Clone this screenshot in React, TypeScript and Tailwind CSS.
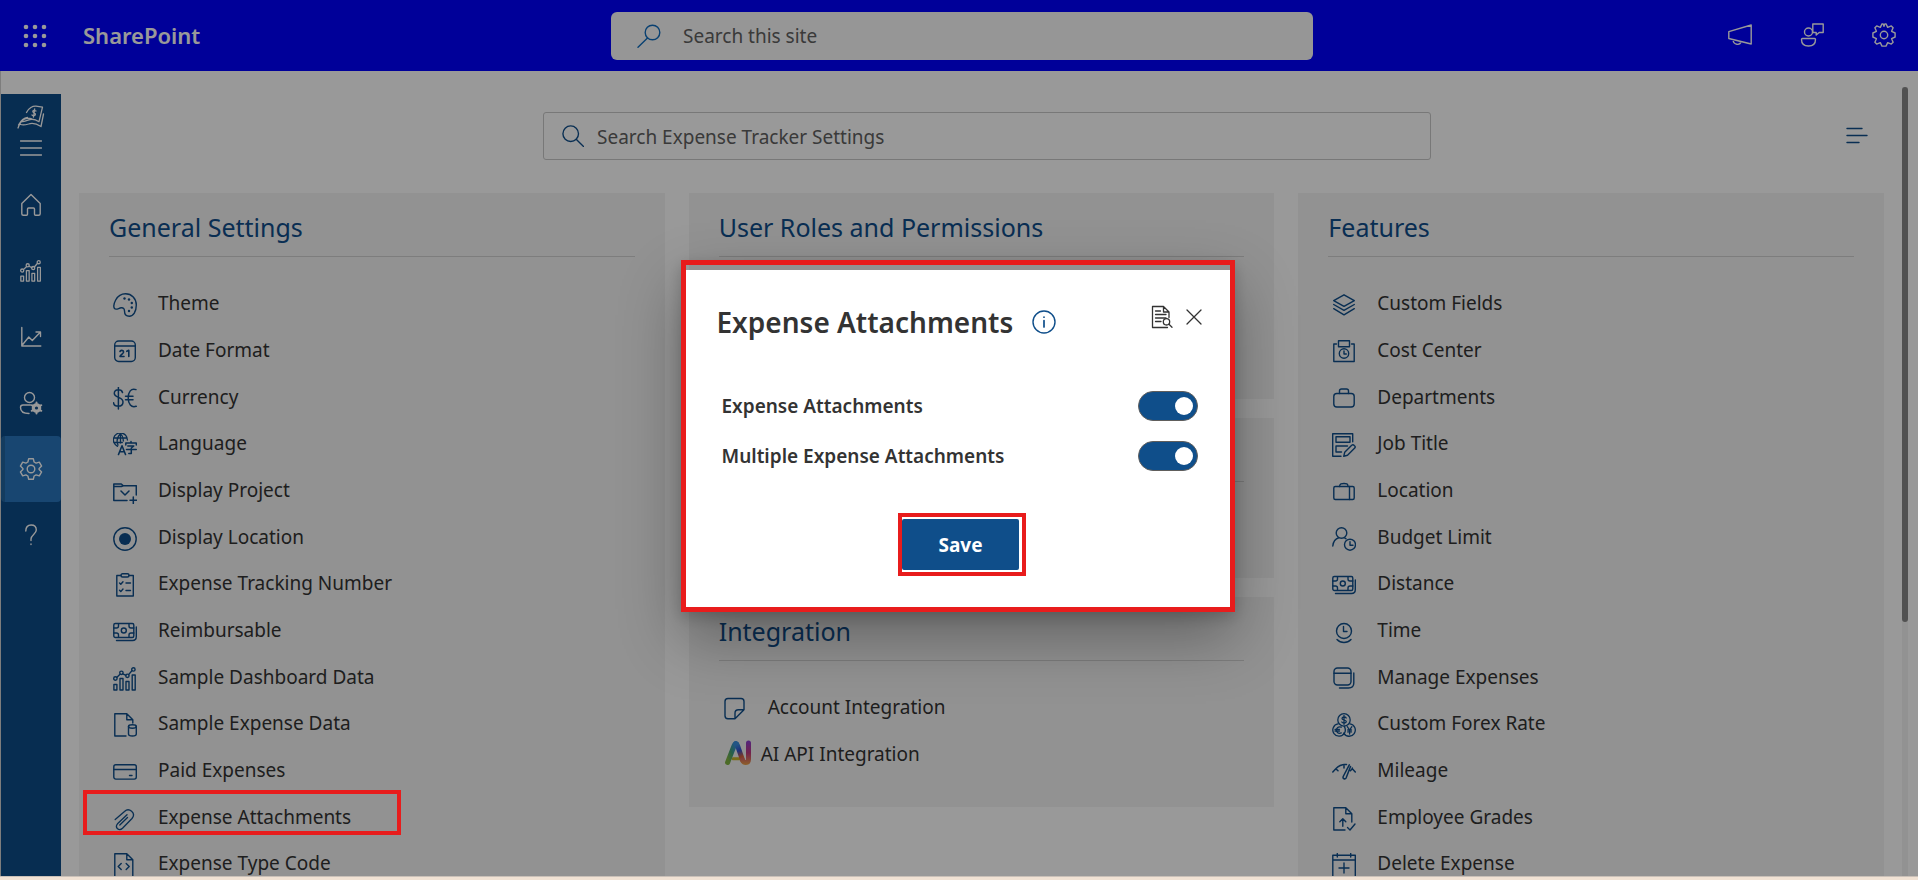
import React from "react";

type IconProps = { className?: string };

function Svg({ className = "size-6", children, w = 1.4, box = "0 0 24 24" }: { className?: string; children: React.ReactNode; w?: number; box?: string }) {
  return (
    <svg aria-hidden="true" viewBox={box} fill="none" stroke="currentColor" strokeWidth={w} strokeLinejoin="round" strokeLinecap="round" className={`shrink-0 ${className}`}>
      {children}
    </svg>
  );
}

const Palette = () => (
  <Svg>
    <path d="M12.5.8C18.700.8 23.300 5.500 23.300 12c0 6.500-3 11.200-7 11.200-3.600 0-4.800-2.800-4.800-5.200 0-2.300-1.200-3.500-3.300-3.200C5.500 15.200 3 17.200 1.500 15.500-.5 12.500 3 .8 12.500.8Z" />
    <g fill="currentColor" stroke="none">
      <circle cx="11.500" cy="5.500" r="1.200" /><circle cx="16" cy="6.500" r="1.200" /><circle cx="18.800" cy="10" r="1.200" /><circle cx="18.800" cy="14.500" r="1.200" /><circle cx="16" cy="18" r="1.200" />
    </g>
  </Svg>
);
const DateIcon = () => (
  <Svg>
    <rect x="1.700" y="1" width="20.600" height="20.500" rx="4" /><path d="M2 6h20" />
    <path d="M7 11.500c.3-1.600 3.600-1.600 3.600.5 0 1.600-3.600 3-3.600 4.500h4M13.800 11.300l2-1v6.200" strokeWidth="1.600" />
  </Svg>
);
const Currency = () => (
  <Svg w={1.5}>
    <path d="M9.500 5.500C9 3.500 7.500 2.800 5.300 2.800 3 2.800 1.300 4 1.300 6.300c0 5 8.700 3.200 8.700 8.600 0 2.600-2 4.200-4.700 4.200C2.500 19.100.8 18 .6 15.700M5.400.5v21.500M23 2.600C18 .8 15.200 5 15.200 11s3 10 8 8.300M12.500 9.200h7.500M12.500 12.800h7.500" />
  </Svg>
);
const Language = () => (
  <Svg w={1.3}>
    <path d="M4.500 13.300A7 7 0 1 1 14.400 7M.8 5h12.600M.8 9.500h8.500M7.500.6c-3.500 3.500-4 8-2.500 11.500M7.500.6C9.500 2.500 10.500 5 10.300 8M7.500.8v9.200" />
    <path d="M5.500 21.500 9 12.800l3.500 8.700M6.700 18.800h4.700" strokeWidth="1.600" />
    <path d="M12.800 12v-2h10.500v2M18 8.500v1.500M14.800 13h6l-2.500 2v5.500h-2.500M13.500 16.500h9.800" strokeWidth="1.500" />
  </Svg>
);
const Project = () => (
  <Svg w={1.5}>
    <path d="M14 20.500H.8V4h7.500l2 1.700h13V15M.8 6.500h7.500l2-.8M8 11l4 4 4-4M20.300 17v6.500M17 20.200h6.700" />
  </Svg>
);
const LocationDot = () => (
  <Svg><circle cx="12" cy="12" r="11.200" /><circle cx="12" cy="12" r="6" fill="currentColor" stroke="none" /></Svg>
);
const Clipboard = () => (
  <Svg>
    <path d="M8 2.500H3.800V23h16.500V2.500H16" /><rect x="8" y=".8" width="8" height="3.200" rx="1.500" />
    <path d="m6.500 10 1.300 1.300 2.200-2.600M6.500 17.300l1.300 1.300L10 16M13 10h4.500M13 17.500h4.500" />
  </Svg>
);
const Cash = () => (
  <Svg>
    <rect x=".8" y="3.500" width="20" height="14" rx="1.500" /><circle cx="10.800" cy="10.500" r="2.500" />
    <path d="M.8 8H3.500a2 2 0 0 0 2-2V3.800M16 3.800V6a2 2 0 0 0 2 2h2.800M.8 13H3.500a2 2 0 0 1 2 2v2.400M16 17.400V15a2 2 0 0 1 2-2h2.800M3.500 20.500H19.500c2.700 0 3.800-1.500 3.800-4V7" />
  </Svg>
);
const Bars = ({ className }: IconProps) => (
  <Svg className={className}>
    <path d="M.9 17.500h3V23h-3ZM7 11.500h3V23H7ZM13 14.500h3V23h-3ZM19.200 8h3V23h-3ZM4 10.200l3-2.900M9.800 6.800l3.200 1.500M15.600 7.600l3.300-3.800" />
    <circle cx="2.400" cy="11.500" r="1.700" /><circle cx="8.400" cy="5.800" r="1.700" /><circle cx="14.400" cy="8.800" r="1.700" /><circle cx="20.400" cy="2.400" r="1.700" />
  </Svg>
);
const DocData = () => (
  <Svg>
    <path d="M13 23H1.800V.8h12l6 6V10M13.800.8v6h6" /><ellipse cx="19.400" cy="13.500" rx="3.900" ry="1.700" /><path d="M15.500 13.500v7.500c0 2.700 7.800 2.700 7.800 0v-7.500" />
  </Svg>
);
const Card = () => (
  <Svg><rect x=".8" y="4.800" width="22.500" height="14.300" rx="2" /><path d="M.8 9.500h22.500M16.500 15.500H19" /></Svg>
);
const Clip = () => (
  <Svg w={1.3}><path d="M2.200 12.500 11.500 4.500c4.500-4.300 12 1.500 7.500 7L9.500 21.300c-3.500 3.300-8-.8-5-4.500l9.500-9M6.800 18 14.500 10.500" /></Svg>
);
const DocCode = () => (
  <Svg><path d="M1.800 25V.8h12l6 6V25M13.800.8v6h6M8.200 10.500 5.200 13.500l3 3M13.200 10.500l3 3-3 3" /></Svg>
);
const Layers = () => (
  <Svg><path d="m12 1.800 10.300 5.800L12 13.400 1.700 7.600ZM1.700 11.500 12 17.300l10.300-5.800M1.700 15.700 12 21.800l10.300-6.100" /></Svg>
);
const CostCenter = () => (
  <Svg><path d="M4.500 4H1.800v17.500h20.400V4h-2.700M6.500.8h11v6h-11Z" /><circle cx="12" cy="13.500" r="4.700" /><path d="M12 11v3h2.300" /></Svg>
);
const Briefcase = () => (
  <Svg><rect x="1.800" y="6.500" width="20.400" height="13.500" rx="3" /><path d="M7.500 6.500V4q0-2 2-2h5q2 0 2 2v2.500" /></Svg>
);
const JobTitle = () => (
  <Svg>
    <path d="M9 23.300H.7V.8h20v8M4 3.800h14v5.500H4ZM15.500 13H4v6h5.500M4 13v6" /><path d="m22.300 12.500c1.200 1 1.200 1.800.2 2.800l-7 7-3.800 1 1-4 7-7q1.300-1 2.600.2Z" />
  </Svg>
);
const Suitcase = () => (
  <Svg><rect x="1.800" y="6.500" width="20.400" height="13" rx="1.500" /><path d="M17.500 6.500v13M7.500 6.500C7.800 3.500 9.500 3.500 12 3.500s4 0 4 3" /></Svg>
);
const Budget = () => (
  <Svg><circle cx="9.500" cy="6" r="5.300" /><path d="M.8 19c.5-4.500 2.700-7.300 6-8.200M12.300 10.800q1 .3 1.700 1" /><circle cx="18" cy="17.700" r="5.500" /><path d="M18 14.700v3.500h3" /></Svg>
);
const Clock = () => (
  <Svg><circle cx="12" cy="11" r="7.500" /><path d="M11.500 6.500v5H15M5 19.500c3.800 4 10.200 4 14 0" /></Svg>
);
const Stack = () => (
  <Svg><rect x="2" y="1" width="17" height="17" rx="3.500" /><path d="M2 6.300h17M7.500 21h9c3.700 0 5.300-1.700 5.300-5V6" /></Svg>
);
const Forex = () => (
  <Svg w={1.3}>
    <circle cx="12" cy="6.900" r="6.200" />
    <path d="M6 10.900a6.200 6.200 0 1 0 6.500 9M18 10.900a6.200 6.200 0 1 1-6.300 9.200M12.300 13.300q2 3.400.2 6.800" />
    <path d="M14.200 5c-.8-1.500-4.200-1.300-4.200.5s4.300 1.200 4.300 3.100c0 1.800-3.600 2-4.500.4M12 2.500v8.800M9.300 14.200c-3-1.200-5 .8-5 2.900s2 4 5 2.800M3 16.300h4.500M3 18h4.500M15.300 13.700l2.300 3.300 2.300-3.300M17.600 17v4M15.700 17h3.800M15.700 18.900h3.800" />
  </Svg>
);
const Mileage = () => (
  <Svg w={1.5}>
    <path d="M.8 12 3.800 8.700C6.500 5.800 10 4.200 14.500 4.500M3.800 8.700l2.200 2.100M12 4.400V8M17.300 4.800 11.200 16.500c-.8 2.200 1.800 3.300 3 1.300L18.500 6.500M23.300 12 20.300 8.700l-1.900 2.100M20.300 8.700V8" />
  </Svg>
);
const Grades = () => (
  <Svg><path d="M13 23H1.800V.8h12l6 6V15M13.800.8v6h6M10.800 19.300V12M7.800 14.700l3-3 3 3M15.500 20.500l2.500 2.500 5-6" /></Svg>
);
const CalendarPlus = () => (
  <Svg><path d="M.8 2.300h22.500V24H.8ZM.8 7h22.500M5.300.5v3.500M18.700.5v3.500M12 10v10M7 15h10" /></Svg>
);
const Note = () => (
  <Svg><path d="M12 21.800H5c-2 0-3-1-3-3V4.500c0-2 1-3 3-3h13c2 0 3 1 3 3v8.300L12 21.800v-5.500c0-2.500 1-3.500 3.500-3.500H21" /></Svg>
);
const AiLogo = () => (
  <svg aria-hidden="true" viewBox="0 0 28 26" fill="none" strokeLinecap="round" strokeLinejoin="round" strokeWidth="5" className="h-[26px] w-7 shrink-0">
    <defs>
      <linearGradient id="ai-left" x1="0" y1="1" x2="1" y2="0"><stop offset=".1" stopColor="#7fb241" /><stop offset=".5" stopColor="#3f9f7b" /><stop offset=".9" stopColor="#3b8ede" /></linearGradient>
      <linearGradient id="ai-mid" gradientUnits="userSpaceOnUse" x1="12" y1="3" x2="20" y2="23"><stop offset=".1" stopColor="#3b8ede" /><stop offset=".4" stopColor="#3450d0" /><stop offset=".7" stopColor="#d5603c" /><stop offset="1" stopColor="#f08a41" /></linearGradient>
      <linearGradient id="ai-right" gradientUnits="userSpaceOnUse" x1="25" y1="1" x2="25" y2="25"><stop offset="0" stopColor="#8b3fd0" /><stop offset=".5" stopColor="#c1387f" /><stop offset="1" stopColor="#eca044" /></linearGradient>
    </defs>
    <path d="M10 18.700h7" stroke="#c9b52c" strokeWidth="3" />
    <path d="M4.600 22.500 11 6q1.200-3 2.500-2" stroke="url(#ai-left)" />
    <path d="M12.700 3.500q1.200.3 1.800 2L19.500 20" stroke="url(#ai-mid)" />
    <path d="M19.500 20q1 2.500 3 2.500 3 0 3-3V3" stroke="url(#ai-right)" />
  </svg>
);

type Item = { label: string; icon: () => React.ReactElement; highlight?: boolean; tight?: boolean };

const general: Item[] = [
  { label: "Theme", icon: Palette },
  { label: "Date Format", icon: DateIcon },
  { label: "Currency", icon: Currency },
  { label: "Language", icon: Language },
  { label: "Display Project", icon: Project },
  { label: "Display Location", icon: LocationDot },
  { label: "Expense Tracking Number", icon: Clipboard },
  { label: "Reimbursable", icon: Cash },
  { label: "Sample Dashboard Data", icon: Bars },
  { label: "Sample Expense Data", icon: DocData },
  { label: "Paid Expenses", icon: Card },
  { label: "Expense Attachments", icon: Clip, highlight: true },
  { label: "Expense Type Code", icon: DocCode },
];
const features: Item[] = [
  { label: "Custom Fields", icon: Layers },
  { label: "Cost Center", icon: CostCenter },
  { label: "Departments", icon: Briefcase },
  { label: "Job Title", icon: JobTitle },
  { label: "Location", icon: Suitcase },
  { label: "Budget Limit", icon: Budget },
  { label: "Distance", icon: Cash },
  { label: "Time", icon: Clock },
  { label: "Manage Expenses", icon: Stack },
  { label: "Custom Forex Rate", icon: Forex },
  { label: "Mileage", icon: Mileage },
  { label: "Employee Grades", icon: Grades },
  { label: "Delete Expense", icon: CalendarPlus },
];
const integration: Item[] = [
  { label: "Account Integration", icon: Note },
  { label: "AI API Integration", icon: AiLogo, tight: true },
];

function Panel({ title, items = [], className = "" }: { title?: string; items?: Item[]; className?: string }) {
  return (
    <section className={`bg-[#f3f3f3] px-[30px] pb-6 ${className}`}>
      <div className="h-16 border-b border-[#d0d0d0] pt-4">
        {title && <h2 className="text-[25px] leading-9 text-[#0f4e8a]">{title}</h2>}
      </div>
      <ul className="pt-6">
        {items.map(({ label, icon: Icon, highlight, tight }) => (
          <li key={label} className="relative h-[47px] nth-[3n]:h-[46px]">
            <a href="#" className={`flex items-start pl-1 text-[19px] leading-7 text-[#333] ${tight ? "gap-[10px]" : "gap-[21px]"}`}>
              <span className={`text-[#0f4e8a] ${tight ? "pt-2" : "pt-3"}`}><Icon /></span>
              <span className="pt-2">{label}</span>
            </a>
            {highlight && <span className="absolute -top-[5px] -left-[26px] z-20 h-[45px] w-[318px] border-4 border-[#e81c1c]" />}
          </li>
        ))}
      </ul>
    </section>
  );
}

const nav = [
  { label: "Home", icon: <Svg className="size-6"><path d="M2.800 10.500 12 1.500l9.200 9v10.200q0 1.500-1.500 1.500h-3.200q-1 0-1-1V16q0-1-1-1h-5q-1 0-1 1v5.200q0 1-1 1H4.300q-1.500 0-1.500-1.500Z" /></Svg> },
  { label: "Dashboard", icon: <Bars className="size-[22px]" /> },
  { label: "Reports", icon: <Svg className="size-6"><path d="M2.800 2.500v18.500h19M3.300 20l6.500-8 3.500 3.500L21 7.500M17 7h4.500v4.500" /></Svg> },
  { label: "Users", icon: <Svg className="size-6"><circle cx="10.500" cy="6.500" r="5" /><path d="M10 22.500c-5 0-8.500-1.500-8.500-6 0-1.500 1-2.500 2.500-2.500h7.500" /><circle cx="17.500" cy="17" r="3.300" strokeWidth="3" /><path d="M17.500 11.500v11M12.700 14.200l9.600 5.600M12.700 19.800l9.600-5.600" strokeWidth="2" /><circle cx="17.500" cy="17" r="1.600" fill="#0f4e8a" stroke="none" /></Svg> },
  { label: "Settings", active: true, icon: <Svg className="size-6"><path d="m9.700 1.700h4.600l.8 3.300 2 1.100 3.200-1 2.300 4-2.500 2.300v1.200l2.500 2.300-2.300 4-3.200-1-2 1.100-.8 3.300H9.700l-.8-3.300-2-1.100-3.200 1-2.300-4 2.500-2.300v-1.200L1.400 9.100l2.300-4 3.200 1 2-1.100Z" /><circle cx="12" cy="12" r="3.800" /></Svg> },
  { label: "Help", icon: <Svg className="size-6"><path d="M6.800 8c0-3.800 2.200-6 5.300-6s5.200 2 5.200 5c0 4-5.300 5-5.300 9v1.500M12 21v.6" /></Svg> },
];

function Toggle({ label }: { label: string }) {
  return (
    <label className="flex h-[50px] items-center justify-between text-[19px] font-semibold text-[#333]">
      {label}
      <input type="checkbox" role="switch" defaultChecked className="h-[30px] w-[60px] shrink-0 appearance-none rounded-full border border-[#605e5c] bg-[#0f4e8a] before:mt-[5px] before:ml-[36px] before:block before:size-[18px] before:rounded-full before:bg-white" />
    </label>
  );
}

export default function App() {
  return (
    <div className="flex h-screen flex-col overflow-hidden bg-white font-['Segoe_UI','Noto_Sans',sans-serif]">
      <header className="grid h-[71px] shrink-0 grid-cols-[611px_1fr_605px] items-center bg-[#0000ff] text-white">
        <div className="flex items-center gap-9 pl-[23px]">
          <button type="button" aria-label="App launcher">
            <svg viewBox="0 0 24 24" fill="currentColor" className="size-6">
              {[3, 12, 21].map((y) => [3, 12, 21].map((x) => <circle key={`${x}-${y}`} cx={x} cy={y} r="2.300" />))}
            </svg>
          </button>
          <a href="#" className="text-[22px] font-semibold">SharePoint</a>
        </div>
        <label className="flex h-12 items-center gap-[22px] rounded-md bg-[#fafafa] pl-[26px] text-[#0f6cbd]">
          <Svg className="size-6"><circle cx="15.500" cy="8.500" r="7.300" /><path d="M10.500 14 1 23.200" /></Svg>
          <input aria-label="Search this site" placeholder="Search this site" className="w-full bg-transparent pt-[2px] text-[19px] outline-none placeholder:text-[#616161]" />
        </label>
        <div className="flex items-center justify-end gap-12 pr-[22px] pb-[2px]">
          <button type="button" aria-label="Announcements"><Svg className="size-6"><path d="M.8 8.700 23.200 2v19L.8 15.500ZM5 16.700c.5 5.500 7 6 8 2" /></Svg></button>
          <button type="button" aria-label="Feedback"><Svg className="size-6"><circle cx="8.500" cy="9" r="4" /><path d="M2.500 15.500h12q1 0 1 1c0 4.500-2.500 6.500-7 6.500s-7-2-7-6.500q0-1 1-1ZM12.800 1h10.400v8.500h-4l-3 2.500V9.500h-3.400Z" /></Svg></button>
          <button type="button" aria-label="Site settings"><Svg className="size-6"><path d="M10 .9h1.200l.8 2.500.8-2.500H14l1.700 3.500 3.600-1.500 1.800 1.800-1.500 3.600L23.100 10v4l-3.500 1.700 1.500 3.600-1.800 1.800-3.600-1.500L14 23.100h-4l-1.700-3.500-3.600 1.500-1.800-1.800 1.500-3.600L.9 14v-4l3.500-1.700-1.500-3.600 1.800-1.800 3.600 1.500Z" /><circle cx="12" cy="12" r="3.700" /></Svg></button>
        </div>
      </header>

      <div className="flex min-h-0 flex-1 border-l border-[#d0d0d0]">
        <nav aria-label="Expense Tracker" className="mt-[23px] flex w-[60px] shrink-0 flex-col bg-[#0c4b87] text-white">
          <a href="#" aria-label="Expense Tracker" className="flex h-[46px] items-center justify-center">
            <Svg className="h-6 w-7" box="0 0 28 24" w={1.3}>
              <path d="M9.500 7.500C11.500 3 16 .8 19 1.200l6.500 1-3.500 14.500q-6-4-11-1.500-5 2-6.500 1M26.500 9 24 21.500Q17 17 11.500 19q-5 1.500-8 .5M1 23c3-9 9-11.500 14.500-8.500M1.500 20c2.500-4.500 5-7 9-7.500" />
              <path d="M19 6q-3-1.500-3.200.5c0 1.500 2.800 1.300 2.600 3-.2 1.600-2.400 1.400-3.400.5M17.700 4l-1.200 8" />
            </Svg>
          </a>
          <button type="button" aria-label="Menu" className="flex h-4 items-center justify-center"><Svg className="h-4 w-[22px]" box="0 0 22 16"><path d="M.5 1h21M.5 8h21M.5 15h21" /></Svg></button>
          <div className="mt-4 flex flex-col">
            {nav.map(({ label, icon, active }) => (
              <a key={label} href="#" aria-label={label} className={`flex h-[66px] items-center justify-center rounded-sm ${active ? "border-l-4 border-[#22649f] bg-[#2875bd] pr-1" : ""}`}>{icon}</a>
            ))}
          </div>
        </nav>

        <main className="flex min-w-0 flex-1 flex-col overflow-hidden pr-[34px] pl-[18px]">
          <div className="grid shrink-0 grid-cols-[1fr_888px_1fr] items-center pt-[41px] pl-[11px]">
            <label className="col-start-2 flex h-12 items-center gap-[13px] rounded-[3px] border border-[#c8c8c8] pl-[18px] text-[#0f4e8a]">
              <Svg className="size-[22px]" w={1.5}><circle cx="9.500" cy="9.500" r="8.500" /><path d="m15.500 15.500 8 8" /></Svg>
              <input aria-label="Search Expense Tracker Settings" placeholder="Search Expense Tracker Settings" className="w-full bg-transparent pt-[2px] text-[19px] outline-none placeholder:text-[#616161]" />
            </label>
            <button type="button" aria-label="View options" className="mr-4 justify-self-end text-[#0f4e8a]"><Svg className="h-[18px] w-[22px]" box="0 0 22 18"><path d="M1 1.500h15M1 8.500h20M1 15.500h12" /></Svg></button>
          </div>
          <div className="mt-[33px] grid min-h-0 flex-1 grid-cols-3 gap-6">
            <Panel title="General Settings" items={general} />
            <div className="flex flex-col gap-[19px]">
              <Panel title="User Roles and Permissions" className="min-h-[206px]" />
              <Panel className="min-h-[160px]" />
              <Panel title="Integration" items={integration} className="min-h-[210px]" />
            </div>
            <Panel title="Features" items={features} />
          </div>
        </main>
        <div className="mt-4 mr-[10px] -ml-4 w-[6px] shrink-0 bg-[#f3f3f3]"><div className="h-[535px] rounded-full bg-[#888]" /></div>
      </div>
      <div className="z-20 h-1 shrink-0 border-t border-[#c9c0b8] bg-[#f1e2d4]" />

      <div className="fixed inset-0 z-10 bg-black/40" />
      <div className="pointer-events-none fixed inset-0 z-30 flex items-center justify-center pb-2">
        <section role="dialog" aria-modal="true" aria-labelledby="dialog-title" className="pointer-events-auto -ml-[3px] w-[554px] border-[5px] border-[#e81c1c] pt-[5px] shadow-[0_26px_58px_rgba(0,0,0,0.32),0_5px_14px_rgba(0,0,0,0.18)]">
          <div className="bg-white pr-8 pb-[31px] pl-[31px]">
            <div className="flex items-start pt-[31px]">
              <h1 id="dialog-title" className="text-[28px] leading-[42px] font-semibold text-[#333]">Expense Attachments</h1>
              <button type="button" aria-label="About expense attachments" className="mt-[9px] ml-[19px] text-[#0f4e8a]"><Svg className="size-6"><circle cx="12" cy="12" r="11" /><path d="M12 10.500v6.500M12 7v.2" strokeWidth="1.700" /></Svg></button>
              <div className="ml-auto flex items-center gap-[10px] pt-1 text-[#333]">
                <button type="button" aria-label="View log"><Svg className="size-6" w={1.3}><path d="M17.500 22.500H2.500V1.500h11l5.500 5.500v5.500M13.500 1.500V7H19M5.500 6h5M5.500 9.500h10.500M5.500 13h10.500M5.500 16.500h5.500" /><circle cx="16.500" cy="16.800" r="3.200" /><path d="m19 19.200 3 3" /></Svg></button>
                <button type="button" aria-label="Close" className="-mr-[6px]"><Svg className="size-5" w={1.3} box="0 0 20 20"><path d="m3 3 14 14M17 3 3 17" /></Svg></button>
              </div>
            </div>
            <div className="mt-[38px] pl-[5px]">
              <Toggle label="Expense Attachments" />
              <Toggle label="Multiple Expense Attachments" />
            </div>
            <div className="mt-8 flex justify-center pl-[10px]">
              <div className="border-4 border-[#e81c1c] py-[2px] pr-[3px]">
                <button type="button" className="block h-[51px] w-[117px] rounded-[2px] bg-[#0f4e8a] pt-[2px] text-[19px] font-bold text-white">Save</button>
              </div>
            </div>
          </div>
        </section>
      </div>
    </div>
  );
}
